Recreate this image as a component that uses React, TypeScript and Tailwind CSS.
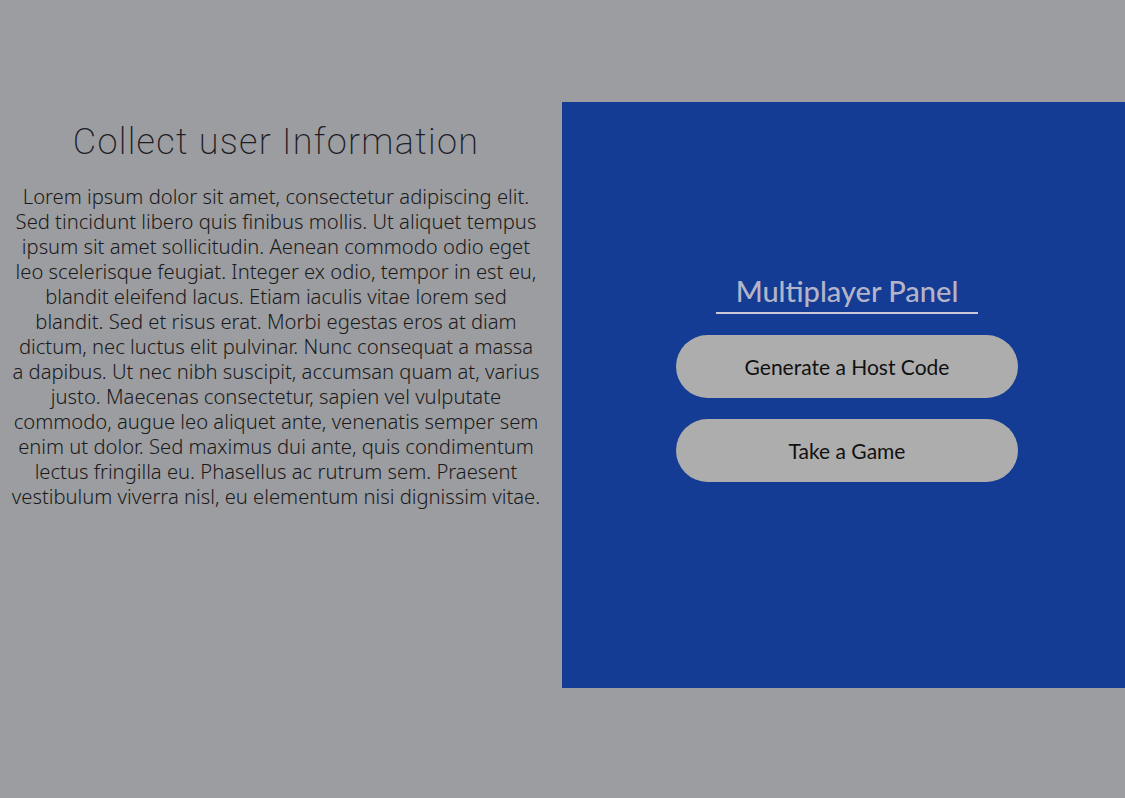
const LINES = [
  "Lorem ipsum dolor sit amet, consectetur adipiscing elit.",
  "Sed tincidunt libero quis finibus mollis. Ut aliquet tempus",
  "ipsum sit amet sollicitudin. Aenean commodo odio eget",
  "leo scelerisque feugiat. Integer ex odio, tempor in est eu,",
  "blandit eleifend lacus. Etiam iaculis vitae lorem sed",
  "blandit. Sed et risus erat. Morbi egestas eros at diam",
  "dictum, nec luctus elit pulvinar. Nunc consequat a massa",
  "a dapibus. Ut nec nibh suscipit, accumsan quam at, varius",
  "justo. Maecenas consectetur, sapien vel vulputate",
  "commodo, augue leo aliquet ante, venenatis semper sem",
  "enim ut dolor. Sed maximus dui ante, quis condimentum",
  "lectus fringilla eu. Phasellus ac rutrum sem. Praesent",
  "vestibulum viverra nisl, eu elementum nisi dignissim vitae.",
];

export default function App() {
  return (
    <div className="min-h-[798px] bg-[#9c9da1] pt-[102px] font-['Lato',sans-serif]">
      <div className="grid grid-cols-[562px_1fr]">
        {/* left: info */}
        <div className="flex flex-col items-center pr-[10px] pt-[20px]">
          <h1 className="font-['Roboto',sans-serif] text-[36px] leading-[40px] font-extralight tracking-[1.3px] text-[#1c1c24]">
            Collect user Information
          </h1>
          <p className="mt-[22px] text-center font-['Noto_Sans',sans-serif] text-[20.2px] leading-[25px] font-light text-[#1a1a1a]">
            {LINES.map((line) => (
              <span key={line} className="block whitespace-nowrap">
                {line}
              </span>
            ))}
          </p>
        </div>

        {/* right: multiplayer panel */}
        <div className="flex h-[586px] flex-col items-center bg-[#143c94] pl-[7px] pt-[172px]">
          <div className="w-[262px] border-b-2 border-[#c8c8d8] pb-[4px] text-center text-[29px] leading-[34px] font-medium text-[#b4b4c8]">
            Multiplayer Panel
          </div>
          <button className="mt-[21px] h-[63px] w-[342px] rounded-full bg-[#adadad] text-[21px] text-[#111]">
            Generate a Host Code
          </button>
          <button className="mt-[21px] h-[63px] w-[342px] rounded-full bg-[#adadad] text-[21px] text-[#111]">
            Take a Game
          </button>
        </div>
      </div>
    </div>
  );
}
